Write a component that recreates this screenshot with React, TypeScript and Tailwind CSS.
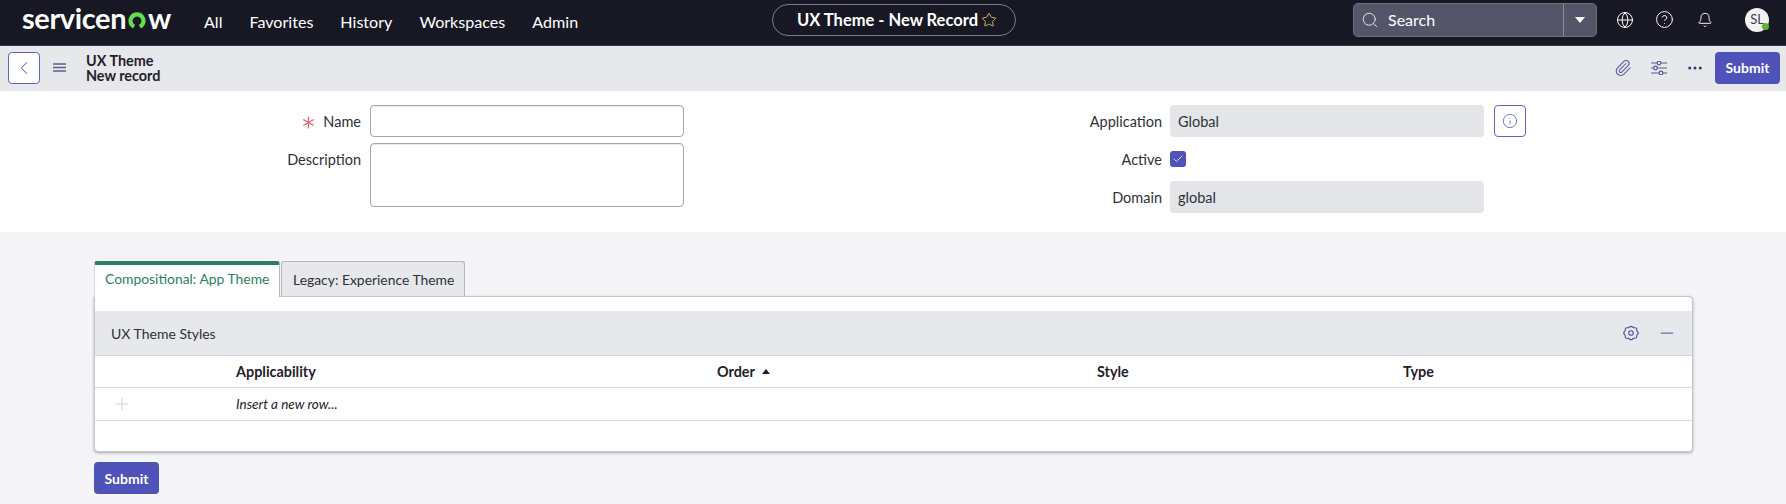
import { Bell, Check, ChevronLeft, CircleHelp, Ellipsis, Globe, Info, Minus, Paperclip, Plus, Search, Star } from "lucide-react";

function Field({ label, required, children, labelWidth, inputGap }: { label: string; required?: boolean; children: React.ReactNode; labelWidth: string; inputGap: string }) {
  return (
    <div className="flex h-[32px] items-start">
      <div className={`${labelWidth} flex h-[34px] items-center justify-end gap-[8px] text-[14.5px] text-[#2e3138]`}>
        {required && (
          <svg viewBox="0 0 12 12" className="h-[13px] w-[13px] text-[#e5606a]" fill="none" stroke="currentColor" strokeWidth="1.100">
            <path d="M6 0.500V11.500M1.200 3.200L10.800 8.800M10.800 3.200L1.200 8.800" />
          </svg>
        )}
        <span>{label}</span>
      </div>
      <div className={`${inputGap} flex items-center gap-[10px]`}>{children}</div>
    </div>
  );
}

function ReadOnly({ value }: { value: string }) {
  return <div className="flex h-[32px] w-[314px] items-center rounded-[4px] bg-[#e4e5e9] pl-[8px] pt-[1px] text-[14.5px] text-[#2e3138]">{value}</div>;
}

function SubmitButton() {
  return <button className="flex h-[32px] w-[65px] items-center justify-center rounded-[4px] bg-[#4f52b8] text-[14px] font-bold text-white">Submit</button>;
}

export default function App() {
  return (
    <div className="flex h-[504px] w-[1786px] flex-col overflow-hidden bg-[#f5f5f8] font-['Lato','Noto_Sans',sans-serif]">
      <header className="relative flex h-[46px] shrink-0 items-center border-b border-[#33353f] bg-[#171823] text-white">
        <div className="ml-[22px] flex shrink-0 items-center text-[29px] leading-none font-bold tracking-[-0.4px] -translate-y-[5px]">
          <span>servicen</span>
          <svg viewBox="0 0 20 20" className="mx-[1px] h-[20px] w-[20px] shrink-0 translate-y-[3px]"><path d="M6 17.500A8.600 8.600 0 1 1 14 17.500L11.800 13.900A4.400 4.400 0 1 0 8.200 13.900Z" fill="#63df4e" /></svg>
          <span>w</span>
        </div>
        <nav className="ml-[33px] flex gap-[27px] text-[16.100px]">
          <span>All</span>
          <span>Favorites</span>
          <span>History</span>
          <span>Workspaces</span>
          <span>Admin</span>
        </nav>
        <div className="absolute left-[772px] top-[4px] flex h-[32px] w-[244px] items-center gap-[3px] rounded-full border border-[#7c7d86] pl-[24px] text-[16.500px] font-bold">
          <span>UX Theme - New Record</span>
          <Star size={16} strokeWidth={1.5} className="text-[#d8b26a]" />
        </div>
        <div className="absolute left-[1353px] top-[3px] flex h-[34px] w-[244px] rounded-[5px] border border-[#6f6f7d] bg-[#55556a]">
          <div className="flex flex-1 items-center gap-[9px] pl-[7px] text-[16px]">
            <Search size={18} strokeWidth={1.3} className="text-[#e4e4ea]" />
            <span>Search</span>
          </div>
          <div className="flex w-[33px] items-center justify-center border-l border-[#8a8a98]">
            <span className="h-0 w-0 border-x-[5px] border-t-[6px] border-x-transparent border-t-white" />
          </div>
        </div>
        <Globe size={18} strokeWidth={1.3} className="absolute left-[1616px] top-[11px]" />
        <CircleHelp size={19} strokeWidth={1.2} className="absolute left-[1655px] top-[10px]" />
        <Bell size={16} strokeWidth={1.4} className="absolute left-[1697px] top-[12px]" />
        <div className="absolute left-[1745px] top-[8px] flex h-[24px] w-[24px] items-center justify-center rounded-full bg-[#f2f2f2] text-[13px] text-[#3b3d45]">
          SL
          <span className="absolute bottom-[2px] right-[0px] h-[7px] w-[7px] rounded-full bg-[#62b02e]" />
        </div>
      </header>

      <div className="flex h-[45px] shrink-0 items-center bg-[#e6e8ec] pb-[2px] pl-[8px] pr-[6px]">
        <button className="flex h-[32px] w-[32px] items-center justify-center rounded-[4px] border border-[#5f63c4] bg-white text-[#5f63c4]">
          <ChevronLeft size={22} strokeWidth={1.1} />
        </button>
        <svg viewBox="0 0 13 9" className="ml-[13px] h-[9px] w-[13px] text-[#5b5e8f]" fill="none" stroke="currentColor" strokeWidth="1.300">
          <path d="M0 1H13M0 4.500H13M0 8H13" />
        </svg>
        <div className="ml-[20px] text-[14.400px] leading-[15px] font-bold text-[#1f2128]">
          <div>UX Theme</div>
          <div>New record</div>
        </div>
        <div className="ml-auto flex items-center text-[#55589a]">
          <Paperclip size={18} strokeWidth={1.4} />
          <svg viewBox="0 0 16 14" className="ml-[19px] h-[14px] w-[16px]" fill="none" stroke="currentColor" strokeWidth="1.200">
            <path d="M0 2H6M10 2H16M0 7H2.500M6.500 7H16M0 12H8M12 12H16" />
            <circle cx="8" cy="2" r="1.800" />
            <circle cx="4.500" cy="7" r="1.800" />
            <circle cx="10" cy="12" r="1.800" />
          </svg>
          <Ellipsis size={18} strokeWidth={2} className="ml-[19px] text-[#35386e]" />
          <div className="ml-[11px]"><SubmitButton /></div>
        </div>
      </div>

      <section className="flex h-[141px] shrink-0 bg-white pt-[14px]">
        <div className="flex w-[700px] flex-col gap-[6px]">
          <Field label="Name" required labelWidth="w-[361px]" inputGap="ml-[9px]">
            <div className="h-[32px] w-[314px] rounded-[4px] border border-[#a4a7b2] shadow-[inset_0_1px_1px_#e5e6ea]" />
          </Field>
          <div className="flex items-start">
            <div className="flex h-[34px] w-[361px] items-center justify-end text-[14.5px] text-[#2e3138]">Description</div>
            <div className="ml-[9px] h-[64px] w-[314px] rounded-[4px] border border-[#a4a7b2] shadow-[inset_0_1px_1px_#e5e6ea]" />
          </div>
        </div>
        <div className="flex flex-col gap-[6px]">
          <Field label="Application" labelWidth="w-[462px]" inputGap="ml-[8px]">
            <ReadOnly value="Global" />
            <button className="flex h-[32px] w-[32px] items-center justify-center rounded-[4px] border border-[#5f63c4] text-[#5f63c4]">
              <Info size={16} strokeWidth={1.3} />
            </button>
          </Field>
          <Field label="Active" labelWidth="w-[462px]" inputGap="ml-[8px]">
            <div className="mt-[8px] flex h-[16px] w-[16px] items-center justify-center rounded-[3px] bg-[#4f52b8] text-white">
              <Check size={12} strokeWidth={1.5} />
            </div>
          </Field>
          <Field label="Domain" labelWidth="w-[462px]" inputGap="ml-[8px]">
            <ReadOnly value="global" />
          </Field>
        </div>
      </section>

      <main className="flex-1 pl-[94px] pt-[29px]">
        <div className="flex h-[35px] gap-[1px]">
          <div className="relative z-10 h-[36px] w-[186px] rounded-t-[3px] border-t-[4px] border-x border-t-[#2f7f5f] border-x-[#d8dae0] border-r-[#b5b8c2] bg-white pt-[4px] pl-[10px] text-[13.900px] text-[#2f7f5f]">
            Compositional: App Theme
          </div>
          <div className="h-[35px] w-[184px] rounded-t-[3px] border border-b-0 border-[#b5b8c2] bg-[#e6e8ec] pt-[8px] pl-[11px] text-[13.900px] text-[#2e3138]">
            Legacy: Experience Theme
          </div>
        </div>
        <div className="h-[156px] w-[1599px] rounded-b-[4px] rounded-tr-[4px] border border-[#c3c6ce] bg-white pt-[14px] shadow-[0_1px_3px_rgba(70,75,95,0.45)]">
          <div className="flex h-[45px] items-center justify-between border-b border-[#d5d7dd] bg-[#e6e8ec] pl-[16px] pr-[15px] text-[14px] text-[#2e3138]">
            <span>UX Theme Styles</span>
            <div className="flex items-center gap-[18px]">
              <svg viewBox="0 0 24 24" className="h-[16px] w-[16px] text-[#4f52a0]" fill="none" stroke="currentColor" strokeWidth="1.700">
                <circle cx="12" cy="12" r="3.400" />
                <path d="M12 2c1.800 0 2.400 1.600 3.800 2s3-.6 4.200.8.4 3 1 4.200 2 1.600 2 3-1.400 1.800-2 3-.2 2.800-1 4.200-2.800.4-4.200.8-2 2-3.800 2-2.400-1.600-3.800-2-3 .6-4.200-.8-.4-3-1-4.200-2-1.600-2-3 1.400-1.800 2-3 .2-2.800 1-4.200 2.800-.4 4.200-.8S10.200 2 12 2Z" />
              </svg>
              <Minus size={20} strokeWidth={1.5} className="text-[#6a6da8]" />
            </div>
          </div>
          <div className="grid h-[32px] grid-cols-[141px_481px_380px_306px_1fr] items-center border-b border-[#d5d7dd] text-[14.400px] font-bold text-[#1f2128]">
            <span />
            <span>Applicability</span>
            <span className="flex items-center gap-[7px]">Order <span className="h-0 w-0 border-x-[4.500px] border-b-[5px] border-x-transparent border-b-[#1f2128]" /></span>
            <span>Style</span>
            <span>Type</span>
          </div>
          <div className="grid h-[33px] grid-cols-[141px_1fr] items-center rounded-b-[3px] border-b border-[#d5d7dd] text-[13.500px] text-[#1f2128] italic">
            <Plus size={20} strokeWidth={1} className="ml-[17px] text-[#c5c7cd]" />
            <span>Insert a new row...</span>
          </div>
        </div>
        <div className="mt-[10px]">
          <SubmitButton />
        </div>
      </main>
    </div>
  );
}
